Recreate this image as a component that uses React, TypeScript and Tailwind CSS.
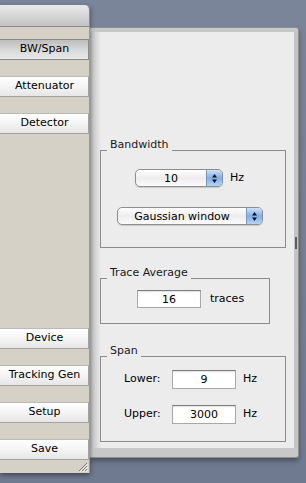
import React from "react";

function SideButton({ label, pressed = false }: { label: string; pressed?: boolean }) {
  return (
    <button
      type="button"
      className={
        pressed
          ? "-ml-[4px] flex h-[21px] w-[93px] items-center justify-center border border-[#8a8a8a] bg-gradient-to-b from-[#bdbdbd] via-[#d8d8d8] to-[#e9e9e9] pl-[4px] text-black"
          : "-ml-[4px] flex h-[21px] w-[93px] items-center justify-center border border-[#a3a3a3] border-t-[#b9b9b9] bg-gradient-to-b from-[#ffffff] via-[#f4f4f4] to-[#e6e6e6] pl-[4px] text-black"
      }
    >
      {label}
    </button>
  );
}

function Arrows() {
  return (
    <svg width="7" height="11" viewBox="0 0 7 11">
      <path d="M3.5 1 L6 4.5 L1 4.5 Z" fill="#111" />
      <path d="M3.5 10 L6 6.5 L1 6.5 Z" fill="#111" />
    </svg>
  );
}

function Popup({ value, width }: { value: string; width: string }) {
  return (
    <div
      className={`flex h-[18px] ${width} overflow-hidden rounded-[5px] border border-[#8e8e8e] bg-gradient-to-b from-[#ffffff] via-[#ededed] to-[#fbfbfb] shadow-[0_1px_1px_rgba(0,0,0,0.15)]`}
    >
      <div className="flex flex-1 items-center justify-center leading-none">{value}</div>
      <div className="flex w-[16px] items-center justify-center border-l border-[#7f96b8] bg-gradient-to-b from-[#cfe2f8] via-[#7eaeea] to-[#b4d4f6]">
        <Arrows />
      </div>
    </div>
  );
}

function Field({ value, height = "h-[19px]" }: { value: string; height?: string }) {
  return (
    <div
      className={`flex ${height} w-[64px] items-center justify-center border border-[#a8a8a8] border-t-[#7d7d7d] bg-white leading-none shadow-[inset_0_1px_1px_rgba(0,0,0,0.12)]`}
    >
      {value}
    </div>
  );
}

function GroupBox({
  title,
  className,
  children,
}: {
  title: string;
  className: string;
  children: React.ReactNode;
}) {
  return (
    <div className={`relative border border-[#8c8c8c] ${className}`}>
      <span className="absolute -top-[13px] left-[6px] bg-[#ececec] px-[3px] leading-[13px] text-[#1a1a1a]">
        {title}
      </span>
      {children}
    </div>
  );
}

export default function App() {
  return (
    <div className="flex h-[483px] w-[306px] items-start overflow-hidden bg-gradient-to-b from-[#7b859a] to-[#6f7a90] font-['DejaVu_Sans',sans-serif] text-[11px] text-black">
      <div className="relative z-10 mt-[5px] flex h-[468px] w-[90px] shrink-0 flex-col shadow-[0_2px_5px_rgba(0,0,0,0.45)]">
        <div className="h-[22px] rounded-tr-[5px] border-b border-r border-[#8c8c8c] bg-gradient-to-b from-[#e9e9e9] to-[#c2c2c2]" />
        <div className="flex flex-1 flex-col border-r border-[#9a9a9a] bg-[#d5d1c7] pt-[12px]">
          <div className="flex flex-col gap-[16px]">
            <SideButton label="BW/Span" pressed />
            <SideButton label="Attenuator" />
            <SideButton label="Detector" />
          </div>
          <div className="flex-1" />
          <div className="flex flex-col gap-[16px]">
            <SideButton label="Device" />
            <SideButton label="Tracking Gen" />
            <SideButton label="Setup" />
            <SideButton label="Save" />
          </div>
          <div className="flex h-[13px] items-end justify-end pb-[1px] pr-[1px]">
            <svg width="11" height="11" viewBox="0 0 11 11">
              <path d="M10 2 L2 10 M10 5 L5 10 M10 8 L8 10" stroke="#7a7a7a" strokeWidth="1" />
              <path d="M11 3 L3 11 M11 6 L6 11 M11 9 L9 11" stroke="#f4f2ee" strokeWidth="1" />
            </svg>
          </div>
        </div>
      </div>

      <div className="mt-[27px] flex h-[431px] w-[209px] shrink-0 flex-col rounded-r-[3px] border-b border-r border-t border-[#8f8f8f] bg-[#c8c8c8] pb-[9px] pt-[4px] shadow-[0_3px_5px_rgba(0,0,0,0.35)]">
        <div className="flex flex-1">
          <div className="flex flex-1 flex-col bg-[linear-gradient(to_right,#bdbdbd,#ececec_11px)] pl-[10px] pt-[118px]">
            <GroupBox title="Bandwidth" className="h-[98px] w-[186px]">
              <div className="flex items-center pl-[34px] pt-[18px]">
                <Popup value="10" width="w-[88px]" />
                <span className="ml-[7px]">Hz</span>
              </div>
              <div className="mt-[20px] pl-[16px]">
                <Popup value="Gaussian window" width="w-[146px]" />
              </div>
            </GroupBox>

            <GroupBox title="Trace Average" className="mt-[30px] h-[46px] w-[170px]">
              <div className="flex items-center pl-[36px] pt-[11px]">
                <Field value="16" height="h-[18px]" />
                <span className="ml-[9px]">traces</span>
              </div>
            </GroupBox>

            <GroupBox title="Span" className="mt-[32px] h-[86px] w-[186px]">
              <div className="ml-[23px] grid grid-cols-[48px_64px_auto] items-center gap-y-[16px] pt-[13px]">
                <span>Lower:</span>
                <Field value="9" />
                <span className="ml-[7px]">Hz</span>
                <span>Upper:</span>
                <Field value="3000" />
                <span className="ml-[7px]">Hz</span>
              </div>
            </GroupBox>
          </div>
          <div className="w-[4px] bg-[#c4c4c4] pt-[205px]">
            <div className="ml-[1px] h-[12px] w-[2px] bg-[#5e5e5e]" />
          </div>
        </div>
      </div>
    </div>
  );
}
